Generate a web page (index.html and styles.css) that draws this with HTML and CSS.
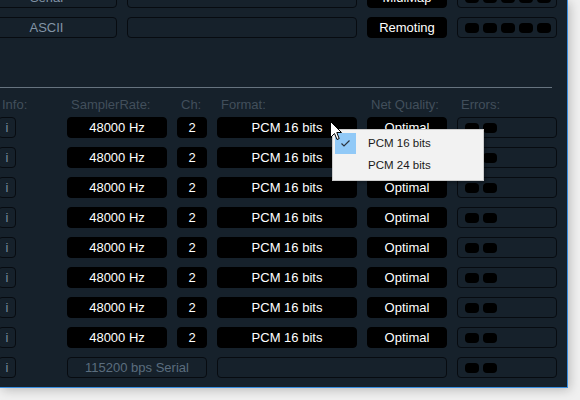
FILE: index.html
```html
<!DOCTYPE html>
<html>
<head>
<meta charset="utf-8">
<link rel="stylesheet" href="styles.css">
</head>
<body>
<div class="window">
  <div class="top">
    <div class="box dim">Serial</div>
    <div class="box"></div>
    <div class="box black">MidiMap</div>
    <div class="box leds"><span class="led"></span><span class="led"></span><span class="led"></span><span class="led"></span><span class="led"></span></div>
    <div class="box dim">ASCII</div>
    <div class="box"></div>
    <div class="box black">Remoting</div>
    <div class="box leds"><span class="led"></span><span class="led"></span><span class="led"></span><span class="led"></span><span class="led"></span></div>
  </div>
  <div class="sep"></div>
  <div class="grid head">
    <div class="h">Info:</div>
    <div></div>
    <div class="h">SamplerRate:</div>
    <div class="h">Ch:</div>
    <div class="h">Format:</div>
    <div class="h">Net Quality:</div>
    <div class="h">Errors:</div>
  </div>
  <div class="grid rows">
    <div class="box info">i</div><div></div><div class="box black">48000 Hz</div><div class="box black">2</div><div class="box black">PCM 16 bits</div><div class="box black">Optimal</div><div class="box leds"><span class="led"></span><span class="led"></span></div>
    <div class="box info">i</div><div></div><div class="box black">48000 Hz</div><div class="box black">2</div><div class="box black">PCM 16 bits</div><div class="box black">Optimal</div><div class="box leds"><span class="led"></span><span class="led"></span></div>
    <div class="box info">i</div><div></div><div class="box black">48000 Hz</div><div class="box black">2</div><div class="box black">PCM 16 bits</div><div class="box black">Optimal</div><div class="box leds"><span class="led"></span><span class="led"></span></div>
    <div class="box info">i</div><div></div><div class="box black">48000 Hz</div><div class="box black">2</div><div class="box black">PCM 16 bits</div><div class="box black">Optimal</div><div class="box leds"><span class="led"></span><span class="led"></span></div>
    <div class="box info">i</div><div></div><div class="box black">48000 Hz</div><div class="box black">2</div><div class="box black">PCM 16 bits</div><div class="box black">Optimal</div><div class="box leds"><span class="led"></span><span class="led"></span></div>
    <div class="box info">i</div><div></div><div class="box black">48000 Hz</div><div class="box black">2</div><div class="box black">PCM 16 bits</div><div class="box black">Optimal</div><div class="box leds"><span class="led"></span><span class="led"></span></div>
    <div class="box info">i</div><div></div><div class="box black">48000 Hz</div><div class="box black">2</div><div class="box black">PCM 16 bits</div><div class="box black">Optimal</div><div class="box leds"><span class="led"></span><span class="led"></span></div>
    <div class="box info">i</div><div></div><div class="box black">48000 Hz</div><div class="box black">2</div><div class="box black">PCM 16 bits</div><div class="box black">Optimal</div><div class="box leds"><span class="led"></span><span class="led"></span></div>
    <div class="box info">i</div><div></div><div class="box serial span2">115200 bps Serial</div><div class="box span2"></div><div class="box leds"><span class="led"></span><span class="led"></span></div>
  </div>
</div>

<div class="menu">
  <div class="item checked"><span class="tick"><svg width="21" height="21" viewBox="0 0 21 21"><path d="M6.5 10.5 L9 13 L14.5 7.5" fill="none" stroke="#2b3440" stroke-width="1.2"/></svg></span><span class="label">PCM 16 bits</span></div>
  <div class="item"><span class="tick"></span><span class="label">PCM 24 bits</span></div>
</div>

<svg class="cursor" width="13" height="20" viewBox="0 0 13 20">
  <path d="M0.5 0.5 V16.5 L4.5 12.5 L7 18.5 L9.2 17.6 L6.8 11.5 H11.5 Z" fill="#fff" stroke="#000" stroke-width="1" stroke-linejoin="miter"/>
</svg>
</body>
</html>
```
FILE: styles.css
```css
html, body {
  margin: 0;
  padding: 0;
}
body {
  width: 580px;
  height: 400px;
  background: #f0f0f0;
  overflow: hidden;
  position: relative;
  font-family: "Liberation Sans", Arial, sans-serif;
  font-size: 13px;
}
.window {
  width: 567px;
  height: 387px;
  background: #16212b;
  border-right: 1px solid #3a8ee0;
  border-bottom: 1px solid #3a8ee0;
  overflow: hidden;
  box-shadow: 2px 2px 10px rgba(0,0,0,0.22);
}
.top {
  display: grid;
  grid-template-columns: 141px 230px 80px 100px;
  grid-auto-rows: 21px;
  column-gap: 10px;
  row-gap: 9px;
  margin-left: -24px;
  margin-top: -13px;
}
.box {
  box-sizing: border-box;
  height: 21px;
  border: 1px solid #070b10;
  border-radius: 4px;
  background: #16212b;
  text-align: center;
  line-height: 19px;
  white-space: nowrap;
  overflow: hidden;
}
.box.black {
  background: #000;
  border-color: #000;
  color: #fff;
}
.box.dim {
  color: #8395a7;
}
.box.serial {
  color: #5b6d7e;
}
.box.info {
  color: #75879a;
}
.span2 {
  grid-column: span 2;
}
.leds {
  display: flex;
  align-items: center;
  gap: 4px;
  padding-left: 7px;
}
.led {
  display: block;
  width: 14px;
  height: 10px;
  border-radius: 4px;
  background: #000;
}
.sep {
  width: 552px;
  height: 1px;
  background: #66737f;
  margin-top: 49px;
}
.grid {
  display: grid;
  grid-template-columns: 18px 31px 100px 30px 140px 80px 100px;
  column-gap: 10px;
  margin-left: -2px;
}
.head {
  margin-top: 9px;
  height: 16px;
  line-height: 16px;
}
.h {
  color: #424f5b;
  padding-left: 4px;
  white-space: nowrap;
}
.rows {
  margin-top: 4px;
  grid-auto-rows: 21px;
  row-gap: 9px;
}
.menu {
  position: absolute;
  left: 332px;
  top: 129px;
  width: 150px;
  height: 48px;
  background: #f2f2f2;
  border: 1px solid #cccccc;
  box-shadow: 2px 2px 3px rgba(0,0,0,0.25);
  padding-top: 2px;
  font-size: 11.5px;
  color: #1a1a1a;
}
.item {
  display: flex;
  align-items: center;
  height: 22px;
}
.tick {
  width: 21px;
  height: 21px;
  margin-left: 2px;
  margin-right: 11px;
}
.checked .tick {
  background: #91c9f7;
}
.label {
  padding-left: 1px;
}
.cursor {
  position: absolute;
  left: 330px;
  top: 121px;
}
```
